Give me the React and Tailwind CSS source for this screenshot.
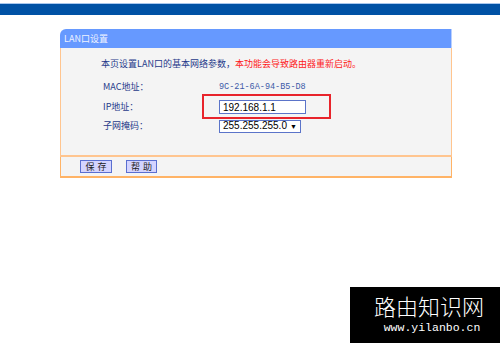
import React from 'react'

const cjk = { fontFamily: '"Noto Sans CJK SC", sans-serif' }

const App = () => {
    return (
        <div className="w-[500px] h-[343px] bg-white relative overflow-hidden" style={cjk}>
            {/* Top bar */}
            <div className="h-[3px] bg-white" />
            <div className="h-px bg-[#a9c8ee]" />
            <div className="h-[11px] bg-[#0052a5]" />

            {/* LAN panel */}
            <div className="ml-[60px] mt-[14px] w-[392px]">
                <div className="h-[19px] bg-[#6699ff] rounded-tl-[6px] border-r border-[#b9d0ff] flex items-center pl-[4px] text-[9px] text-[#eef3ff] leading-none">
                    LAN口设置
                </div>

                <div className="h-[109px] bg-[#f4f4f4] border-x border-b-2 border-[#ffc58f] pt-[10px]">
                    <div className="pl-[40px] text-[9px] leading-[12px] whitespace-nowrap">
                        <span className="text-[#1f3a8a]">本页设置LAN口的基本网络参数，</span>
                        <span className="text-[#ff1a1a]">本功能会导致路由器重新启动。</span>
                    </div>

                    <div className="mt-[10px] pl-[42px] flex flex-col text-[9px] text-[#1f3a8a]">
                        <div className="h-[14px] flex items-center">
                            <span className="w-[116px]">MAC地址：</span>
                            <span className="text-[8.5px] text-[#3d5aa8]" style={{ fontFamily: '"Liberation Mono", monospace' }}>9C-21-6A-94-B5-D8</span>
                        </div>
                        <div className="h-[20px] mt-[3px] flex items-center">
                            <span className="w-[116px]">IP地址：</span>
                            <div className="relative">
                                <div className="w-[87px] h-[14px] bg-white border border-[#5b74c9] flex items-center pl-[3px] text-[10px] text-black" style={{ fontFamily: '"Liberation Sans", Arial, sans-serif' }}>
                                    192.168.1.1
                                </div>
                                <div className="absolute left-[-17px] top-[-6px] w-[129px] h-[25px] border-2 border-[#e8242b]" />
                            </div>
                        </div>
                        <div className="h-[14px] mt-[2px] flex items-center">
                            <span className="w-[116px]">子网掩码：</span>
                            <div className="w-[82px] h-[13px] bg-white border border-[#5b74c9] flex items-center pl-[3px] text-[10px] text-black leading-none" style={{ fontFamily: '"Liberation Sans", Arial, sans-serif' }}>
                                255.255.255.0<span className="ml-[3px] text-[7px]">▼</span>
                            </div>
                        </div>
                    </div>
                </div>

                <div className="h-[21px] bg-[#f4f4f4] border-x border-b-2 border-[#ffb366] flex items-center pl-[19px] gap-[14px]">
                    <button className="w-[32px] h-[13px] bg-[#d4d4ff] border border-[#5a6fd0] text-[9px] leading-none text-[#222] tracking-[3px] pl-[3px] flex items-center justify-center">保存</button>
                    <button className="w-[31px] h-[13px] bg-[#d4d4ff] border border-[#5a6fd0] text-[9px] leading-none text-[#222] tracking-[3px] pl-[3px] flex items-center justify-center">帮助</button>
                </div>
            </div>

            {/* Watermark */}
            <div className="absolute left-[350px] top-[287px] w-[150px] h-[56px] bg-black flex flex-col items-center">
                <div className="mt-[6px] ml-[8px] text-[22px] leading-[24px] text-white font-light">路由知识网</div>
                <div className="mt-[4px] ml-[14px] text-[11.5px] leading-[14px] text-white" style={{ fontFamily: '"Liberation Mono", monospace' }}>www.yilanbo.cn</div>
            </div>
        </div>
    )
}

export default App
